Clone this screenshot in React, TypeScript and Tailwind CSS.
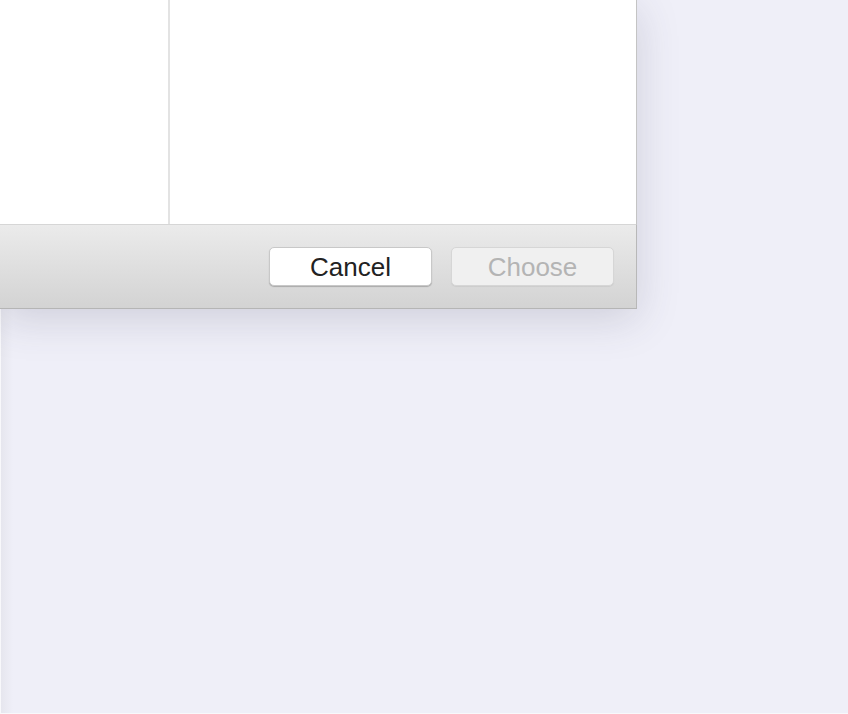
export default function App() {
  return (
    <div className="relative w-[848px] h-[714px] overflow-hidden bg-[#efeff8]">
      <div className="absolute inset-y-0 left-0 w-[13px] border-l border-[#f8f8fb] bg-gradient-to-r from-[#e6e6ee] to-transparent" />
      <div className="absolute bottom-0 inset-x-0 h-px bg-[#f8f8fb]" />
      <div
        className="relative w-[637px] flex flex-col shadow-[0_10px_40px_rgba(60,60,90,0.18)]"
        style={{ fontFamily: '"Liberation Sans", Arial, sans-serif' }}
      >
        <div className="flex h-[224px] bg-white border-r border-[#c4c4c4]">
          <div className="w-[170px] h-full border-r-2 border-[#e3e3e3]" />
          <div className="flex-1" />
        </div>
        <div className="h-[85px] flex items-center justify-end gap-[19px] pr-[22px] bg-gradient-to-b from-[#ebebeb] to-[#d3d3d3] border-t border-[#d6d6d6] border-b border-b-[#b5b5b5] border-r border-r-[#b8b8b8]">
          <button className="w-[163px] h-[39px] pt-px rounded-[5px] bg-white border border-[#c8c8c8] shadow-[0_1px_1px_rgba(0,0,0,0.22)] text-[26px] leading-none text-[#222222]">
            Cancel
          </button>
          <button className="w-[163px] h-[39px] pt-px rounded-[5px] bg-[#f0f0f0] border border-[#d6d6d6] shadow-[0_1px_1px_rgba(0,0,0,0.06)] text-[26px] leading-none text-[#b4b4b4]">
            Choose
          </button>
        </div>
      </div>
    </div>
  );
}
